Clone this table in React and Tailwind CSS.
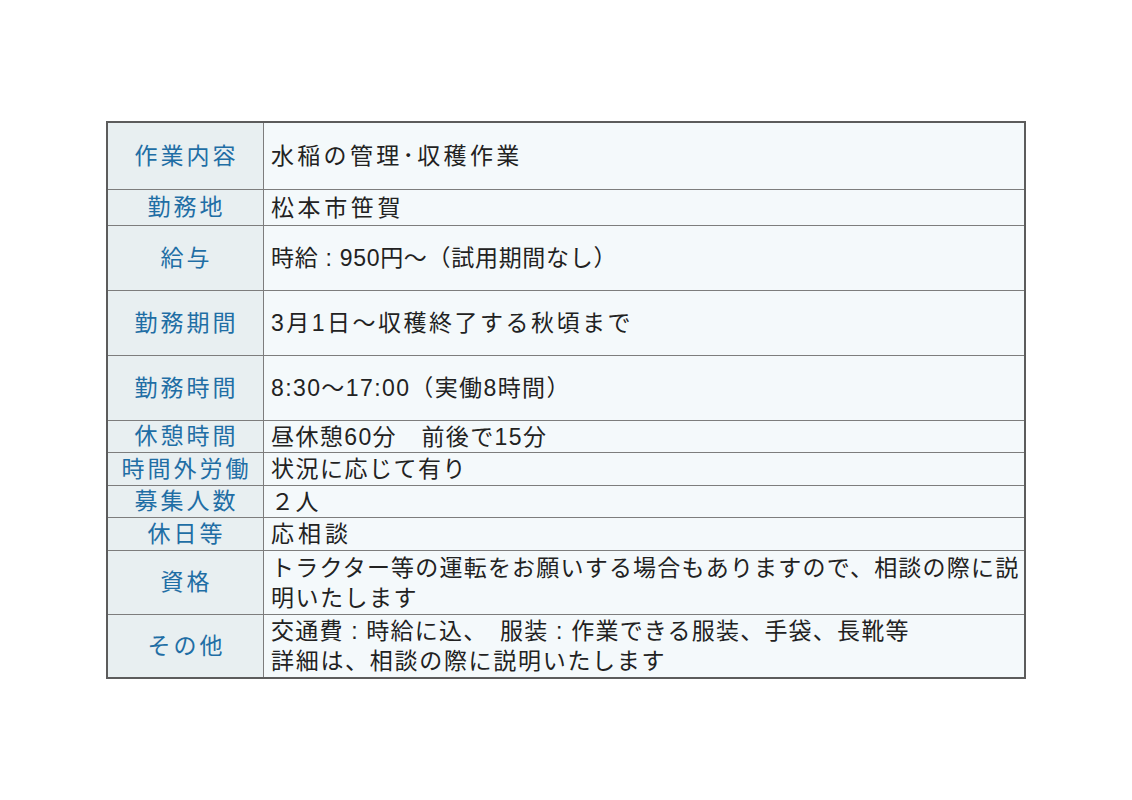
// each body line carries its own letter spacing so the line lengths match the sheet
const rows = [
  { label: '作業内容', h: 'h-[66px]', body: [['水稲の管理･収穫作業', 'tracking-[3.3px]']] },
  { label: '勤務地', h: 'h-[36px]', body: [['松本市笹賀', 'tracking-[3.6px]']] },
  { label: '給与', h: 'h-[65px]', body: [['時給 : 950円～（試用期間なし）', 'tracking-[0.7px]']] },
  { label: '勤務期間', h: 'h-[65px]', body: [['3月1日～収穫終了する秋頃まで', 'tracking-[2.5px]']] },
  { label: '勤務時間', h: 'h-[65px]', body: [['8:30～17:00（実働8時間）', 'tracking-[1.4px]']] },
  { label: '休憩時間', h: 'h-[32px]', body: [['昼休憩60分　前後で15分', 'tracking-[1.4px]']] },
  { label: '時間外労働', h: 'h-[33px]', body: [['状況に応じて有り', 'tracking-[1.5px]']] },
  { label: '募集人数', h: 'h-[32px]', body: [['２人', 'tracking-[1.5px]']] },
  { label: '休日等', h: 'h-[33px]', body: [['応相談', 'tracking-[4px]']] },
  {
    label: '資格',
    h: 'h-[64px]',
    body: [
      ['トラクター等の運転をお願いする場合もありますので、相談の際に説', 'tracking-[1.2px]'],
      ['明いたします', 'tracking-[1.5px]'],
    ],
  },
  {
    label: 'その他',
    h: 'h-[63px]',
    body: [
      ['交通費 : 時給に込、　服装 : 作業できる服装、手袋、長靴等', 'tracking-[1.2px]'],
      ['詳細は、相談の際に説明いたします', 'tracking-[1.7px]'],
    ],
  },
];

const App = () => {
  return (
    <div
      className="min-h-screen bg-white pt-[121px]"
      style={{ fontFamily: '"Liberation Sans", "Noto Sans CJK JP", sans-serif' }}
    >
      <div className="mx-auto w-[920px] border-2 border-[#5c5c5c] bg-[#f4f9fb]">
        {rows.map((row, i) => (
          <div
            key={row.label}
            className={`flex ${row.h} ${i > 0 ? 'border-t border-[#7d7d7d]' : ''}`}
          >
            <div className="flex w-[156px] shrink-0 items-center justify-center border-r border-[#7d7d7d] bg-[#e8eff1] pl-[2px] text-[23px] tracking-[3px] text-[#1f6ea5]">
              {row.label}
            </div>
            <div className="flex flex-1 flex-col justify-center pl-[7px] text-[23px] leading-[30px] text-[#222]">
              {row.body.map(([line, spacing]) => (
                <div key={line} className={`whitespace-nowrap ${spacing}`}>{line}</div>
              ))}
            </div>
          </div>
        ))}
      </div>
    </div>
  );
};

export default App;
